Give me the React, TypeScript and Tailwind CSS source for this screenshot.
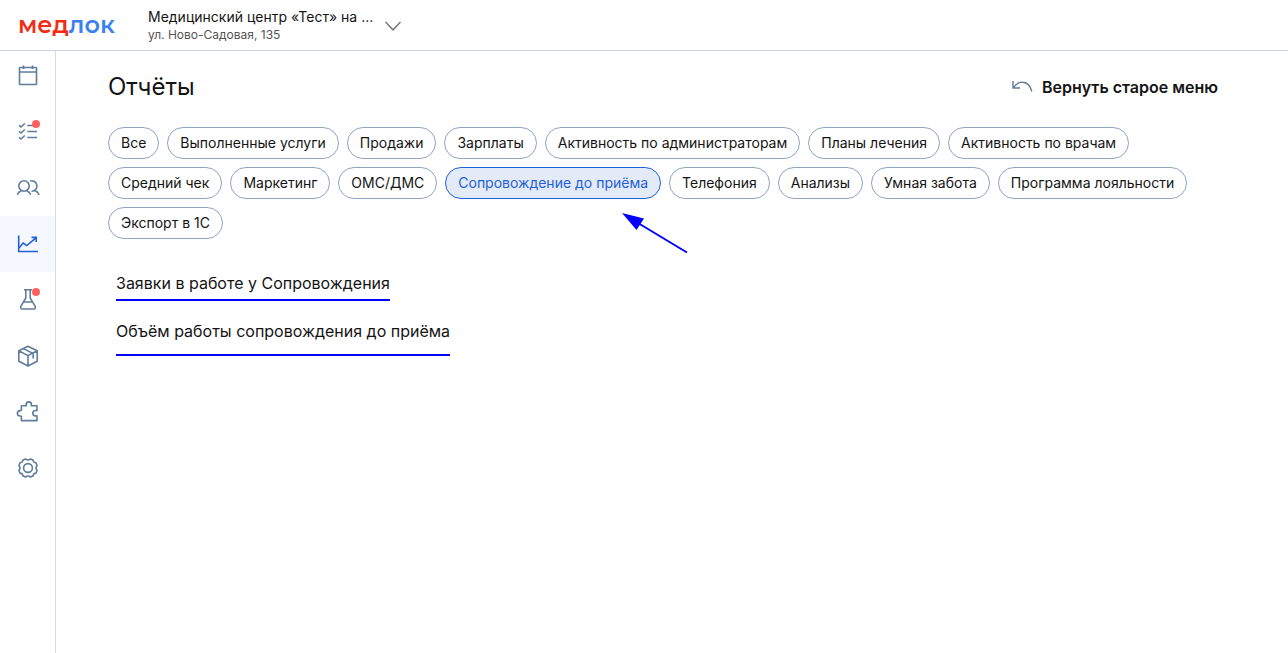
import React from 'react';
import clsx from 'clsx';

type IconProps = { children: React.ReactNode };

function Icon({ children }: IconProps) {
  return (
    <svg
      viewBox="0 0 24 24"
      className="h-6 w-6"
      fill="none"
      stroke="currentColor"
      strokeWidth="1.6"
      aria-hidden="true"
    >
      {children}
    </svg>
  );
}

const navItems = [
  {
    label: 'Расписание',
    icon: (
      <Icon>
        <rect x="3.5" y="3.5" width="17" height="17" rx="0.5" />
        <path d="M3.5 8h17M7.5 1.5V5M16.5 1.5V5" />
      </Icon>
    ),
  },
  {
    label: 'Задачи',
    badge: true,
    icon: (
      <Icon>
        <path d="M3 5.3l2 1.7 3.8-3.5M3 11.3L5 13l3.8-3.5M3 17.3L5 19l3.8-3.5" />
        <path d="M11.3 5.5H21M11.3 11.5H21M11.3 17.5H21" />
      </Icon>
    ),
  },
  {
    label: 'Пациенты',
    icon: (
      <Icon>
        <circle cx="8" cy="10" r="5.2" />
        <path d="M1.2 18.8c.8-1.9 2.2-3.3 4-4.1M10.8 14.7c1.8.8 3.2 2.2 4 4.1" />
        <path d="M14 5.1a5.2 5.2 0 1 1 1.5 10.1M18.8 14.5c2 .8 3.5 2.3 4.4 4.3" />
      </Icon>
    ),
  },
  {
    label: 'Отчёты',
    active: true,
    icon: (
      <Icon>
        <path d="M2.7 3.5v16H22" />
        <path d="M3 16l4.2-5 3.6 2.6L20 5.8M15.5 5.4h4.7V10" />
      </Icon>
    ),
  },
  {
    label: 'Лаборатория',
    badge: true,
    icon: (
      <Icon>
        <path d="M8 1.8h8M9.8 1.8V10l-5 8.3c-.7 1.3 0 2.7 1.5 2.7h11.4c1.5 0 2.2-1.4 1.5-2.7l-5-8.3V1.8M7.4 14h9.2" />
      </Icon>
    ),
  },
  {
    label: 'Склад',
    icon: (
      <Icon>
        <path strokeLinejoin="round" d="M12 2.2l9.2 4.6v10.4L12 22l-9.2-4.8V6.8zM2.8 6.8L12 11.6l9.2-4.8M12 11.6V22" />
        <path d="M7.4 4.6l9.8 4.9v5" />
      </Icon>
    ),
  },
  {
    label: 'Интеграции',
    icon: (
      <Icon>
        <path
          strokeLinejoin="round"
          d="M5.4 20.6v-4.3c-.4-.3-.8-.3-1.3-.3a2.7 2.7 0 0 1 0-5.4c.5 0 .9-.1 1.3-.4V5.8h4.8c.2-.4 0-.9 0-1.3a2.6 2.6 0 0 1 5.2 0c0 .5-.2.9 0 1.3H21v4.7c-.5.2-1 0-1.5 0a2.7 2.7 0 0 0 0 5.4c.5 0 1-.1 1.5.1v4.6z"
        />
      </Icon>
    ),
  },
  {
    label: 'Настройки',
    icon: (
      <Icon>
        <circle cx="12" cy="12" r="4.4" />
        <path
          strokeLinejoin="round"
          d="M14.3 2.9l2.8 1a3 3 0 0 0 3 3l1 2.8a3 3 0 0 0 0 4.6l-1 2.8a3 3 0 0 0-3 3l-2.8 1a3 3 0 0 0-4.6 0l-2.8-1a3 3 0 0 0-3-3l-1-2.8a3 3 0 0 0 0-4.6l1-2.8a3 3 0 0 0 3-3l2.8-1a3 3 0 0 0 4.6 0z"
        />
      </Icon>
    ),
  },
];

const filters = [
  'Все',
  'Выполненные услуги',
  'Продажи',
  'Зарплаты',
  'Активность по администраторам',
  'Планы лечения',
  'Активность по врачам',
  'Средний чек',
  'Маркетинг',
  'ОМС/ДМС',
  'Сопровождение до приёма',
  'Телефония',
  'Анализы',
  'Умная забота',
  'Программа лояльности',
  'Экспорт в 1С',
];

const activeFilter = 'Сопровождение до приёма';

function Header() {
  return (
    <header className="flex h-[51px] items-center border-b border-[#c8d3e3] pl-[18px]">
      <a
        href="#"
        className="w-[130px] shrink-0 font-['Montserrat','Inter',sans-serif] text-2xl leading-8 font-semibold text-[#f52b14]"
      >
        мед<span className="text-[#3b82f0]">лок</span>
      </a>
      <button type="button" className="flex items-center gap-3 pt-0.5 text-left">
        <span className="block">
          <span className="block text-sm leading-4 text-[#141414]">Медицинский центр «Тест» на ...</span>
          <span className="mt-0.5 block text-xs leading-4 text-[#555]">ул. Ново-Садовая, 135</span>
        </span>
        <svg viewBox="0 0 16 10" className="h-2.5 w-4" fill="none" stroke="#777" strokeWidth="1.5" aria-hidden="true">
          <path d="M0.5 1L8 8.8 15.5 1" />
        </svg>
      </button>
    </header>
  );
}

function Sidebar() {
  return (
    <aside className="w-14 shrink-0 border-r border-[#d9dbe0]">
      <nav className="-mt-[3px] flex flex-col">
        {navItems.map((item) => (
          <a
            key={item.label}
            href="#"
            aria-label={item.label}
            className={clsx(
              'flex h-14 items-center pl-4',
              item.active ? 'bg-[#f5f8ff] text-[#2360d8]' : 'text-[#5f7d9c]'
            )}
          >
            <span className="relative">
              {item.icon}
              {item.badge && <span className="absolute top-0 right-0 h-2 w-2 rounded-full bg-[#ff6060]" />}
            </span>
          </a>
        ))}
      </nav>
    </aside>
  );
}

// Blue pointer that hangs below the selected filter
function Pointer() {
  return (
    <svg viewBox="0 0 66 41" className="absolute top-[46px] left-[177px] h-[41px] w-[66px]" aria-hidden="true">
      <path d="M16 10L65 39.5" stroke="#00f" strokeWidth="2" />
      <path d="M0 0L22 5.5 14.5 17z" fill="#00f" />
    </svg>
  );
}

export default function App() {
  return (
    <div className="flex min-h-screen flex-col bg-white font-['Inter',sans-serif] text-[#141414]">
      <Header />
      <div className="flex flex-1">
        <Sidebar />
        <main className="min-w-0 flex-1 pt-5 pr-[70px] pl-[52px]">
          <div className="flex h-8 items-center justify-between">
            <h1 className="text-2xl">Отчёты</h1>
            <button type="button" className="flex items-center gap-2 font-semibold">
              <svg viewBox="0 0 24 24" className="h-6 w-6" fill="none" stroke="#5f7d9c" strokeWidth="1.4" aria-hidden="true">
                <path d="M3 6v7h7M3.2 12.8c3-4.2 6.2-6 9.6-5.6 4.5.4 7.7 3.8 9 9.3" />
              </svg>
              Вернуть старое меню
            </button>
          </div>

          <div className="mt-6 flex flex-wrap gap-2">
            {filters.map((name) => (
              <div key={name} className="relative">
                <button
                  type="button"
                  aria-pressed={name === activeFilter}
                  className={clsx(
                    'h-8 rounded-full border px-3 text-sm whitespace-nowrap',
                    name === activeFilter
                      ? 'border-[#2360d8] bg-[#e3eaf8] text-[#2360d8]'
                      : 'border-[#8fa5c2]'
                  )}
                >
                  {name}
                </button>
                {name === activeFilter && <Pointer />}
              </div>
            ))}
          </div>

          <div className="mt-8 flex flex-col items-start gap-[18px] pl-2">
            <a href="#" className="border-b-2 border-[#00f] pb-1">
              Заявки в работе у Сопровождения
            </a>
            <a href="#" className="border-b-2 border-[#00f] pb-[11px]">
              Объём работы сопровождения до приёма
            </a>
          </div>
        </main>
      </div>
    </div>
  );
}
